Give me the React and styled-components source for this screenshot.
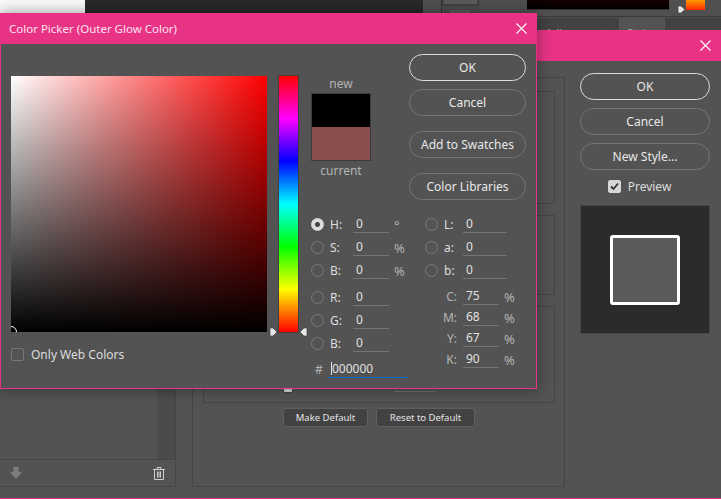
import React from "react";
import styled, { createGlobalStyle } from "styled-components";

const Global = createGlobalStyle`
    html, body {
        margin: 0;
        background: #535353;
    }
    * {
        box-sizing: border-box;
    }
`;

const Desktop = styled.div`
    position: relative;
    width: 721px;
    height: 499px;
    overflow: hidden;
    background: #535353;
    font-family: "Noto Sans", "Open Sans", sans-serif;
    font-size: 12px;
    color: #dcdcdc;
`;

/* app behind the dialogs */
const AppBar = styled.div`
    display: flex;
    height: 40px;
`;
const DocPage = styled.div`
    width: 85px;
    background: #fafafa;
`;
const Canvas = styled.div`
    width: 338px;
    background: linear-gradient(#2a2a2a, #222222);
`;
const Panels = styled.div`
    flex: 1;
    display: flex;
    flex-direction: column;
    background: #505050;
`;
const ColorRow = styled.div`
    display: flex;
    align-items: flex-start;
    height: 17px;
    padding-left: 18px;
    border-bottom: 1px solid #3a3a3a;
`;
const Nav = styled.svg`
    width: 39px;
    height: 14px;
    margin-right: 47px;
`;
const SpectrumWide = styled.div`
    width: 142px;
    height: 10px;
    background: linear-gradient(#140000, #000000);
    border-bottom: 1px solid #333;
`;
const SpectrumThin = styled.div`
    width: 19px;
    height: 10px;
    background: linear-gradient(#ff9a00, #ff2a00);
`;
const SliderMark = styled.svg`
    width: 9px;
    height: 9px;
    margin: 5px 0 0 8px;
`;
const TabRow = styled.div`
    display: flex;
    flex: 1;
    margin-top: 1px;
    padding-left: 114px;
    background: #424242;
    color: #aaa;
    font-size: 11px;
`;
const Tab = styled.div`
    width: ${(p) => p.$w}px;
    padding-top: 7px;
    text-align: center;
    background: ${(p) => (p.$active ? "#535353" : "transparent")};
`;

/* layer style window */
const LayerWindow = styled.div`
    position: absolute;
    top: 30px;
    left: 0;
    right: 0;
    bottom: 0;
    display: flex;
    flex-direction: column;
    background: #535353;
    border-bottom: 1px solid #e83385;
`;
const TitleBar = styled.div`
    flex: none;
    display: flex;
    align-items: center;
    justify-content: space-between;
    height: 31px;
    padding: 0 10px 0 9px;
    background: #e83385;
    color: #fbe3ee;
    font-size: 11.5px;
`;
const CloseIcon = styled.svg`
    width: 11px;
    height: 11px;
`;
const LayerBody = styled.div`
    flex: 1;
    display: flex;
    padding: 16px 11px 11px 0;
`;
const StyleList = styled.div`
    width: 176px;
    display: flex;
    flex-direction: column;
    border: 1px solid #454545;
    border-left: none;
`;
const ListArea = styled.div`
    flex: 1;
    display: flex;
    justify-content: flex-end;
    border-bottom: 1px solid #454545;
`;
const Scrollbar = styled.div`
    width: 17px;
    background: #4b4b4b;
`;
const ListFooter = styled.div`
    flex: none;
    height: 26px;
    display: flex;
    align-items: center;
    justify-content: space-between;
    padding: 0 10px;
`;
const OptionsPanel = styled.div`
    width: 373px;
    margin-left: 16px;
    padding: 13px 9px 0 10px;
    display: flex;
    flex-direction: column;
    gap: 11px;
    border: 1px solid #454545;
`;
const Group = styled.div`
    height: ${(p) => p.$h}px;
    display: flex;
    align-items: flex-end;
    flex: none;
    padding-left: 79px;
    padding-bottom: 9px;
    border: 1px solid #454545;
    background: #535353;
`;
const Thumb = styled.div`
    width: 10px;
    height: 12px;
    border-radius: 0 0 2px 2px;
    background: #dcdcdc;
    border: 1px solid #444;
`;
const GroupLine = styled.div`
    width: 42px;
    height: 1px;
    margin: 0 0 1px 101px;
    background: #6f6f6f;
`;
const DefaultRow = styled.div`
    display: flex;
    justify-content: center;
    gap: 8px;
    margin-top: -6px;
`;
const DefaultButton = styled.div`
    width: ${(p) => p.$w}px;
    height: 19px;
    line-height: 17px;
    text-align: center;
    font-size: 9.5px;
    color: #e4e4e4;
    background: #424242;
    border: 1px solid #5f5f5f;
    border-radius: 3px;
`;
const ActionColumn = styled.div`
    flex: 1;
    margin: -4px 0 0 15px;
    display: flex;
    flex-direction: column;
    gap: 8px;
`;
const PillButton = styled.div`
    flex: none;
    height: 27px;
    line-height: 25px;
    text-align: center;
    border-radius: 14px;
    border: 1px solid ${(p) => (p.$primary ? "#dcdcdc" : "#767676")};
    color: #e8e8e8;
    margin-top: ${(p) => p.$top || 0}px;
`;
const PreviewRow = styled.label`
    display: flex;
    align-items: center;
    justify-content: center;
    gap: 7px;
    height: 13px;
    margin: 2px 0 4px;
    padding-right: 11px;
`;
const CheckBox = styled.span`
    display: flex;
    align-items: center;
    justify-content: center;
    width: 13px;
    height: 13px;
    border-radius: 2px;
    background: ${(p) => (p.$on ? "#d6d6d6" : "transparent")};
    border: 1px solid ${(p) => (p.$on ? "#d6d6d6" : "#767676")};
`;
const PreviewBox = styled.div`
    height: 129px;
    display: flex;
    align-items: center;
    justify-content: center;
    background: #2b2b2b;
    border: 1px solid #464646;
`;
const PreviewSquare = styled.div`
    width: 70px;
    height: 70px;
    background: #5b5b5b;
    border: 3px solid #fff;
    border-radius: 3px;
`;

/* color picker window */
const PickerWindow = styled.div`
    position: absolute;
    top: 13px;
    left: 0;
    width: 537px;
    height: 376px;
    display: flex;
    flex-direction: column;
    background: #535353;
    border: 1px solid #e83385;
    border-top: none;
    box-shadow: 0 0 14px rgba(0, 0, 0, 0.4);
`;
const PickerTitle = styled(TitleBar)`
    margin: 0 -1px;
`;
const PickerBody = styled.div`
    flex: 1;
    display: flex;
    padding: 10px 0 0 10px;
`;
const GradientColumn = styled.div`
    width: 287px;
    padding-top: 22px;
`;
const GradientRow = styled.div`
    display: flex;
    gap: 12px;
`;
const SatField = styled.div`
    position: relative;
    width: 256px;
    height: 256px;
    overflow: hidden;
    background: linear-gradient(to top, #000, rgba(0, 0, 0, 0)),
        linear-gradient(to right, #fff, #f00);
`;
const SatMarker = styled.div`
    position: absolute;
    left: -6px;
    bottom: -6px;
    width: 12px;
    height: 12px;
    border-radius: 50%;
    border: 1px solid #fff;
`;
const HueWrap = styled.div`
    position: relative;
    width: 19px;
    height: 256px;
`;
const HueBar = styled.div`
    width: 19px;
    height: 256px;
    background: linear-gradient(
        #f00 0%,
        #f0f 16.6%,
        #00f 33.3%,
        #0ff 50%,
        #0f0 66.6%,
        #ff0 83.3%,
        #f00 100%
    );
    box-shadow: 0 0 0 1px #3f3f3f;
`;
const Arrow = styled.svg`
    position: absolute;
    bottom: -5px;
    width: 9px;
    height: 10px;
    ${(p) => (p.$side === "left" ? "left: -10px;" : "right: -10px;")}
`;
const WebRow = styled.label`
    display: flex;
    align-items: center;
    gap: 7px;
    margin-top: 14px;
    color: #dcdcdc;
`;
const ControlsColumn = styled.div`
    margin-left: 13px;
    width: 215px;
    display: flex;
    flex-direction: column;
`;
const TopControls = styled.div`
    display: flex;
    justify-content: space-between;
    height: 159px;
`;
const SwatchColumn = styled.div`
    width: 60px;
    margin-top: 21px;
    text-align: center;
    color: #b4b4b4;
    line-height: 18px;
`;
const SwatchBox = styled.div`
    height: 68px;
    margin-bottom: 1px;
    border: 1px solid #3a3a3a;
    background: linear-gradient(#000 50%, #8b4f4f 50%);
`;
const ButtonColumn = styled.div`
    width: 117px;
    display: flex;
    flex-direction: column;
    gap: 8px;
`;
const FieldGrid = styled.div`
    display: flex;
`;
const FieldColumn = styled.div`
    width: ${(p) => p.$w}px;
    display: flex;
    flex-direction: column;
`;
const Row = styled.div`
    display: flex;
    align-items: center;
    height: ${(p) => p.$h || 23}px;
    flex: none;
    margin-top: ${(p) => p.$top || 0}px;
`;
const Radio = styled.span`
    position: relative;
    flex: none;
    width: 13px;
    height: 13px;
    margin-right: 6px;
    border-radius: 50%;
    border: 1px solid #7a7a7a;
    ${(p) =>
        p.$on &&
        `
        background: radial-gradient(circle, #444 0 2px, #dcdcdc 3px);
        border-color: #dcdcdc;
    `}
`;
const FieldLabel = styled.span`
    flex: none;
    width: ${(p) => p.$w}px;
    text-align: ${(p) => p.$align || "left"};
    color: ${(p) => p.$color || "#dcdcdc"};
`;
const FieldValue = styled.span`
    flex: none;
    width: ${(p) => p.$w}px;
    height: 17px;
    line-height: 15px;
    margin-left: ${(p) => p.$left || 0}px;
    padding-left: 3px;
    border-bottom: 1px solid #747474;
    color: #e0e0e0;
`;
const Unit = styled.span`
    margin-left: 5px;
    font-size: 13px;
    color: #b4b4b4;
`;
const Hash = styled.span`
    width: 17px;
    padding-left: 4px;
    color: #b4b4b4;
`;
const HexValue = styled(FieldValue)`
    width: 80px;
    border-bottom-color: #0a6ecf;
`;
const Caret = styled.span`
    display: inline-block;
    width: 1px;
    height: 13px;
    vertical-align: -2px;
    background: #e0e0e0;
`;

const Close = () => (
    <CloseIcon viewBox="0 0 11 11">
        <path d="M.5.5l10 10M10.5.5l-10 10" stroke="#fff" strokeWidth="1.1" fill="none" />
    </CloseIcon>
);

const hsb = [
    { l: "H:", on: true, unit: "°" },
    { l: "S:", unit: "%" },
    { l: "B:", unit: "%" },
];
const rgb = ["R:", "G:", "B:"];
const lab = ["L:", "a:", "b:"];
const cmyk = [
    ["C:", "75"],
    ["M:", "68"],
    ["Y:", "67"],
    ["K:", "90"],
];

const App = () => {
    return (
        <Desktop>
            <Global />
            <AppBar>
                <DocPage />
                <Canvas />
                <Panels>
                    <ColorRow>
                        <Nav viewBox="0 0 39 14">
                            <rect x=".5" y="-1" width="39" height="15" fill="#4d4d4d" stroke="#333" />
                            <rect x="2" y="-1" width="35" height="6" fill="#5a5a5a" stroke="#333" />
                            <path d="M10 10v3M12 10v3M14 10v3M16 10v3M18 10v3M20 10v3M22 10v3M24 10v3M26 10v3M28 10v3" stroke="#6d6d6d" />
                        </Nav>
                        <SpectrumWide />
                        <SliderMark viewBox="0 0 9 9">
                            <path d="M1 1h3l4 3.5L4 8H1z" fill="#e6e6e6" stroke="#333" strokeWidth=".6" />
                        </SliderMark>
                        <SpectrumThin />
                    </ColorRow>
                    <TabRow>
                        <Tab $w={82}>Adjustments</Tab>
                        <Tab $w={46} $active>Styles</Tab>
                    </TabRow>
                </Panels>
            </AppBar>

            <LayerWindow>
                <TitleBar>
                    <span />
                    <Close />
                </TitleBar>
                <LayerBody>
                    <StyleList>
                        <ListArea>
                            <Scrollbar />
                        </ListArea>
                        <ListFooter>
                            <svg width="12" height="12" viewBox="0 0 12 12">
                                <path d="M3.5 0h5v5H12L6 12 0 5h3.5z" fill="#7d7d7d" />
                            </svg>
                            <svg width="12" height="13" viewBox="0 0 12 13" fill="none" stroke="#cfcfcf">
                                <path d="M0 2.5h12M4 2.5V.5h4v2M1.5 2.5v10h9v-10M4.5 4.5v6M6 4.5v6M7.5 4.5v6" />
                            </svg>
                        </ListFooter>
                    </StyleList>
                    <OptionsPanel>
                        <Group $h={113} />
                        <Group $h={80} />
                        <Group $h={97}>
                            <Thumb />
                            <GroupLine />
                        </Group>
                        <DefaultRow>
                            <DefaultButton $w={85}>Make Default</DefaultButton>
                            <DefaultButton $w={99}>Reset to Default</DefaultButton>
                        </DefaultRow>
                    </OptionsPanel>
                    <ActionColumn>
                        <PillButton $primary>OK</PillButton>
                        <PillButton>Cancel</PillButton>
                        <PillButton>New Style...</PillButton>
                        <PreviewRow>
                            <CheckBox $on>
                                <svg width="9" height="9" viewBox="0 0 9 9">
                                    <path d="M1 4.5l2.5 2.5L8 1.5" stroke="#333" strokeWidth="1.8" fill="none" />
                                </svg>
                            </CheckBox>
                            Preview
                        </PreviewRow>
                        <PreviewBox>
                            <PreviewSquare />
                        </PreviewBox>
                    </ActionColumn>
                </LayerBody>
            </LayerWindow>

            <PickerWindow>
                <PickerTitle>
                    <span>Color Picker (Outer Glow Color)</span>
                    <Close />
                </PickerTitle>
                <PickerBody>
                    <GradientColumn>
                        <GradientRow>
                            <SatField>
                                <SatMarker />
                            </SatField>
                            <HueWrap>
                                <HueBar />
                                <Arrow $side="left" viewBox="0 0 9 10">
                                    <path d="M1 1h3l4 4-4 4H1z" fill="#e6e6e6" stroke="#333" strokeWidth=".6" />
                                </Arrow>
                                <Arrow $side="right" viewBox="0 0 9 10">
                                    <path d="M8 1H5L1 5l4 4h3z" fill="#e6e6e6" stroke="#333" strokeWidth=".6" />
                                </Arrow>
                            </HueWrap>
                        </GradientRow>
                        <WebRow>
                            <CheckBox />
                            Only Web Colors
                        </WebRow>
                    </GradientColumn>
                    <ControlsColumn>
                        <TopControls>
                            <SwatchColumn>
                                new
                                <SwatchBox />
                                current
                            </SwatchColumn>
                            <ButtonColumn>
                                <PillButton $primary>OK</PillButton>
                                <PillButton>Cancel</PillButton>
                                <PillButton $top={7}>Add to Swatches</PillButton>
                                <PillButton $top={7}>Color Libraries</PillButton>
                            </ButtonColumn>
                        </TopControls>
                        <FieldGrid>
                            <FieldColumn $w={114}>
                                {hsb.map((f) => (
                                    <Row key={f.l}>
                                        <Radio $on={f.on} />
                                        <FieldLabel $w={23}>{f.l}</FieldLabel>
                                        <FieldValue $w={36}>0</FieldValue>
                                        <Unit>{f.unit}</Unit>
                                    </Row>
                                ))}
                                {rgb.map((l, i) => (
                                    <Row key={l} $top={i === 0 ? 4 : 0}>
                                        <Radio />
                                        <FieldLabel $w={23}>{l}</FieldLabel>
                                        <FieldValue $w={36}>0</FieldValue>
                                    </Row>
                                ))}
                                <Row $top={3}>
                                    <Hash>#</Hash>
                                    <HexValue>
                                        <Caret />
                                        000000
                                    </HexValue>
                                </Row>
                            </FieldColumn>
                            <FieldColumn $w={100}>
                                {lab.map((l) => (
                                    <Row key={l}>
                                        <Radio />
                                        <FieldLabel $w={19}>{l}</FieldLabel>
                                        <FieldValue $w={44}>0</FieldValue>
                                    </Row>
                                ))}
                                {cmyk.map(([l, v], i) => (
                                    <Row key={l} $h={21} $top={i === 0 ? 4 : 0}>
                                        <FieldLabel $w={32} $align="right" $color="#b4b4b4">
                                            {l}
                                        </FieldLabel>
                                        <FieldValue $w={36} $left={6}>
                                            {v}
                                        </FieldValue>
                                        <Unit>%</Unit>
                                    </Row>
                                ))}
                            </FieldColumn>
                        </FieldGrid>
                    </ControlsColumn>
                </PickerBody>
            </PickerWindow>
        </Desktop>
    );
};

export default App;
